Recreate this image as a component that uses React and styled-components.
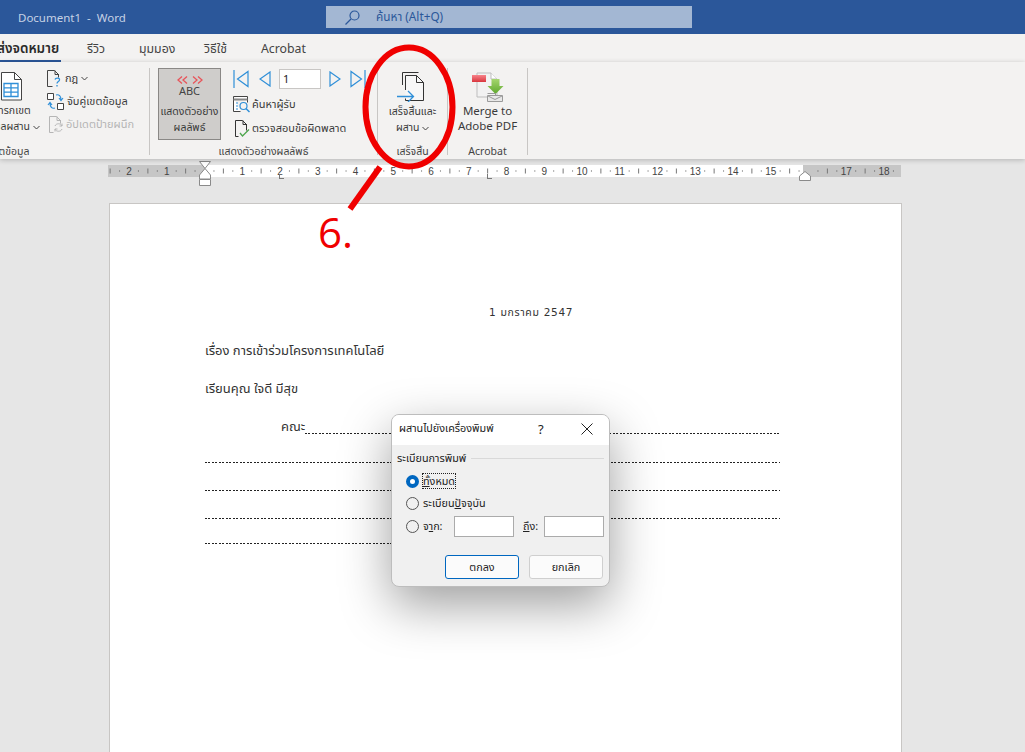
import React from 'react';
import styled, { createGlobalStyle } from 'styled-components';

const UI_FONT = '"Noto Sans", "Noto Sans Thai", "Open Sans", "DejaVu Sans", sans-serif';

const Global = createGlobalStyle`
    html, body {
        margin: 0;
        padding: 0;
        overflow: hidden;
        background: #e6e6e6;
        font-family: ${UI_FONT};
    }
`;

const NavFirst = () => (
    <svg width="18" height="18" viewBox="0 0 18 18" fill="none" stroke="#2f8fd8" strokeWidth="1.2">
        <path d="M1 0v18M15 1.500v15L4.500 9z" />
    </svg>
);
const NavPrev = () => (
    <svg width="12" height="16" viewBox="0 0 12 16" fill="none" stroke="#2f8fd8" strokeWidth="1.2">
        <path d="M11 1v14L1 8z" />
    </svg>
);
const NavNext = () => (
    <svg width="12" height="16" viewBox="0 0 12 16" fill="none" stroke="#2f8fd8" strokeWidth="1.2">
        <path d="M1 1v14L11 8z" />
    </svg>
);
const NavLast = () => (
    <svg width="17" height="18" viewBox="-2 0 17 18" fill="none" stroke="#2f8fd8" strokeWidth="1.2">
        <path d="M14 0v18M0 1.500v15L10.500 9z" />
    </svg>
);
const Chevron = () => (
    <svg width="7" height="5" viewBox="0 0 7 5" fill="none" stroke="#444" strokeWidth="1">
        <path d="M.5 1l3 3 3-3" />
    </svg>
);
const SearchGlass = () => (
    <svg width="15" height="15" viewBox="0 0 15 15" fill="none" stroke="#2b579a" strokeWidth="1.2">
        <circle cx="9.500" cy="5.500" r="4.500" />
        <path d="M6 9l-5.500 5.500" />
    </svg>
);
const FieldDoc = () => (
    <svg width="21" height="29" viewBox="0 0 21 29" fill="none">
        <path d="M.5.500h13l7 7v20.500H.500z" fill="#fff" stroke="#444" />
        <path d="M13.500.500v7h7" stroke="#444" />
        <path d="M3 11.500h14v13H3zM3 15.800h14M3 20.100h14M10 11.500v13" stroke="#2f8fd8" strokeWidth="1.300" />
    </svg>
);
const RuleDoc = () => (
    <svg width="15" height="17" viewBox="0 0 15 17" fill="none">
        <path d="M.5 16.500V.5h7l4 4v3M8 .5v4h4M.5 16.500h5" stroke="#444" />
        <path d="M8 9.500c.5-2 5-2 4.500.5-.2 1.500-2.500 1.500-2.500 3.500M10 15v1.500" stroke="#2f8fd8" strokeWidth="1.300" />
    </svg>
);
const MatchFields = () => (
    <svg width="17" height="17" viewBox="0 0 17 17" fill="none">
        <path d="M.5.500h6v6h-6zM10.500 10.500h6v6h-6z" stroke="#444" fill="#fff" />
        <path d="M9 2c3-1 5 1 5 5M12 5l2 2.500L16 5M8 15c-3 1-5-1-5-5M1 12l2-2.500L5 12" stroke="#2f8fd8" strokeWidth="1.200" />
    </svg>
);
const UpdateDoc = () => (
    <svg width="14" height="17" viewBox="0 0 14 17" fill="none" stroke="#b5b5b5">
        <path d="M.5 16.500V.5h7l4 4v3M8 .5v4h4M.5 16.500h4" />
        <path d="M6 10c1-3 6-3 7 0M13 7.500V10h-2.500M13 13c-1 3-6 3-7 0M6 15.500V13h2.500" />
    </svg>
);
const FindDoc = () => (
    <svg width="17" height="17" viewBox="0 0 17 17" fill="none">
        <path d="M.5.500h14v6M.5.500v15h7" stroke="#444" fill="#fff" />
        <path d="M.5 3.500h14" stroke="#888" strokeWidth="2" />
        <path d="M3 7h2M3 10h2M3 13h2" stroke="#2f8fd8" />
        <circle cx="10.500" cy="10" r="3.500" stroke="#2f8fd8" strokeWidth="1.200" />
        <path d="M13 12.500l3.500 3.500" stroke="#2f8fd8" strokeWidth="1.500" />
    </svg>
);
const CheckDoc = () => (
    <svg width="15" height="17" viewBox="0 0 15 17" fill="none">
        <path d="M.5 16.500V.5h7l4 4v6M8 .5v4h4M.5 16.500h3" stroke="#333" />
        <path d="M5 13l2.500 3L14 9.500" stroke="#4da64d" strokeWidth="1.300" />
    </svg>
);
// extra width on the right keeps the page where the reference has it once centred
const FinishDoc = () => (
    <svg width="31" height="30" viewBox="0 0 31 30" fill="none">
        <path d="M5.500 13V.5h16" stroke="#333" />
        <path d="M8.500 18V3.500h11l7 7v18h-18v-2" fill="#f7f7f7" stroke="#333" />
        <path d="M19.500 3.500v7h7" stroke="#333" />
        <path d="M0 24.500h16M11 19l5.500 5.500L11 30" stroke="#2f8fd8" strokeWidth="1.300" />
    </svg>
);
const AcrobatDoc = () => (
    <svg width="32" height="30" viewBox="0 0 32 30" fill="none">
        <defs>
            <linearGradient id="redBar" x1="0" y1="0" x2="0" y2="1">
                <stop offset="0" stopColor="#f7838a" />
                <stop offset="1" stopColor="#d9363e" />
            </linearGradient>
            <linearGradient id="greenArrow" x1="0" y1="0" x2="0" y2="1">
                <stop offset="0" stopColor="#a5d66e" />
                <stop offset="1" stopColor="#5fa82e" />
            </linearGradient>
        </defs>
        <path d="M5 1h14l6 6v18H5z" fill="#f2f2f2" stroke="#bdbdbd" />
        <path d="M19 1v6h6" stroke="#bdbdbd" fill="#fff" />
        <rect x="0" y="3" width="14" height="7" fill="url(#redBar)" />
        <path d="M19.500 7h8v7h4l-8 8-8-8h4z" fill="url(#greenArrow)" />
        <path d="M15.500 23.500h15v6h-15z" fill="#e8e8e8" stroke="#9a9a9a" />
        <path d="M16 24l7 3.500 7-3.500" stroke="#9a9a9a" />
        <path d="M15.500 21.500h8v2" stroke="#9a9a9a" />
    </svg>
);
const PreviewMark = () => (
    <svg width="26" height="8" viewBox="0 0 26 8" fill="none" stroke="#e8545a" strokeWidth="1.300">
        <path d="M5 .5L1 4l4 3.500M10 .5L6 4l4 3.500M16 .5L20 4l-4 3.500M21 .5L25 4l-4 3.500" />
    </svg>
);
const CloseMark = () => (
    <svg width="12" height="12" viewBox="0 0 12 12" fill="none" stroke="#222" strokeWidth="1">
        <path d="M.5.500l11 11M11.500.500l-11 11" />
    </svg>
);

const RULER_STEP = 37.75;
const RULER_ZERO = 96.5;
const rulerMarks = [];
for (let i = -3; i <= 19; i++) {
    const x = RULER_ZERO + i * RULER_STEP;
    // 16 sits under the right indent marker, so the reference doesn't show it
    if (i !== 0 && i !== 16 && i > -3 && i < 19) rulerMarks.push({ key: `n${i}`, x, label: Math.abs(i) });
    [0.25, 0.75].forEach((f) => rulerMarks.push({ key: `d${i}${f}`, x: x + f * RULER_STEP, dot: true }));
    rulerMarks.push({ key: `t${i}`, x: x + 0.5 * RULER_STEP, tick: true });
}

const RulerMarks = () => (
    <RulerSvg width="793" height="12" viewBox="0 0 793 12">
        {rulerMarks.map((m) => {
            if (m.dot) return <rect key={m.key} x={m.x - 0.5} y="5.500" width="1" height="1" fill="#555" />;
            if (m.tick) return <rect key={m.key} x={m.x - 0.5} y="3.500" width="1" height="5" fill="#777" />;
            return (
                <text key={m.key} x={m.x} y="10" textAnchor="middle" fontSize="10" fill="#444" fontFamily="Liberation Sans, sans-serif">
                    {m.label}
                </text>
            );
        })}
    </RulerSvg>
);

const App = () => (
    <Screen>
        <Global />
        <TitleBar>
            <DocName>Document1&nbsp; -&nbsp; Word</DocName>
            <SearchBox>
                <SearchGlass />
                <SearchHint>ค้นหา (Alt+Q)</SearchHint>
            </SearchBox>
        </TitleBar>

        <Tabs>
            <Tab $active $width={61} $clip>ส่งจดหมาย</Tab>
            <Tab $width={18} $gap={26}>รีวิว</Tab>
            <Tab $width={32} $gap={34}>มุมมอง</Tab>
            <Tab $width={27} $gap={33}>วิธีใช้</Tab>
            <Tab $width={46} $gap={30}>Acrobat</Tab>
        </Tabs>

        <Ribbon>
            <Group $width={150} $labelLeft>
                <GroupBody>
                    <BigButton $width={80} $shift={-29}>
                        <FieldDoc />
                        <BigText>แทรกเขต<br />ข้อมูลผสาน <Chevron /></BigText>
                    </BigButton>
                    <SmallColumn $gap={3} $left={-4}>
                        <SmallButton><RuleDoc />กฎ <Chevron /></SmallButton>
                        <SmallButton><MatchFields />จับคู่เขตข้อมูล</SmallButton>
                        <SmallButton $disabled $indent={2}><UpdateDoc />อัปเดตป้ายผนึก</SmallButton>
                    </SmallColumn>
                </GroupBody>
                <GroupLabel $clipLeft>แทรกเขตข้อมูล</GroupLabel>
            </Group>

            <Group $width={228}>
                <GroupBody $pad={8}>
                    <PreviewButton>
                        <PreviewMark />
                        <PreviewAbc>ABC</PreviewAbc>
                        <PreviewText>แสดงตัวอย่าง<br />ผลลัพธ์</PreviewText>
                    </PreviewButton>
                    <SmallColumn $gap={4} $left={12}>
                        <NavRow>
                            <NavFirst />
                            <NavPrev />
                            <RecordInput>1</RecordInput>
                            <NavNext />
                            <NavLast />
                        </NavRow>
                        <SmallButton $gap={2}><FindDoc />ค้นหาผู้รับ</SmallButton>
                        <SmallButton $gap={2} $indent={2}><CheckDoc />ตรวจสอบข้อผิดพลาด</SmallButton>
                    </SmallColumn>
                </GroupBody>
                <GroupLabel>แสดงตัวอย่างผลลัพธ์</GroupLabel>
            </Group>

            <Group $width={70}>
                <GroupBody>
                    <BigButton $width={69} $shift={0}>
                        <FinishDoc />
                        <BigText>เสร็จสิ้นและ<br />ผสาน <Chevron /></BigText>
                    </BigButton>
                </GroupBody>
                <GroupLabel>เสร็จสิ้น</GroupLabel>
            </Group>

            <Group $width={80}>
                <GroupBody>
                    <BigButton $width={79} $shift={0}>
                        <AcrobatDoc />
                        <LatinText>Merge to<br />Adobe PDF</LatinText>
                    </BigButton>
                </GroupBody>
                <GroupLabel>Acrobat</GroupLabel>
            </Group>
        </Ribbon>

        <RulerWrap>
            <Ruler>
                <RulerMargin $width={97} />
                <RulerLive />
                <RulerMargin $width={98} />
                <RulerMarks />
                <TabStop $left={171} />
                <TabStop $left={379} />
                <IndentLeft width="12" height="26" viewBox="0 0 12 26" fill="#fff" stroke="#8a8a8a">
                    <path d="M.5.500h11L6 7.500zM6 7.500L.5 14v4h11v-4zM.5 18.500h11v6h-11z" />
                </IndentLeft>
                <IndentRight width="12" height="10" viewBox="0 0 12 10" fill="#fff" stroke="#8a8a8a">
                    <path d="M6 .5L11.500 5v4.500H.500V5z" />
                </IndentRight>
            </Ruler>
        </RulerWrap>

        <Workspace>
            <Page>
                <DateLine>1 มกราคม 2547</DateLine>
                <BodyLine>เรื่อง การเข้าร่วมโครงการเทคโนโลยี</BodyLine>
                <BodyLine>เรียนคุณ ใจดี มีสุข</BodyLine>
                <FirstDotted>
                    <span>คณะ</span>
                    <DotFill />
                </FirstDotted>
                <DottedLine />
                <DottedLine />
                <DottedLine />
                <DottedLine $width={220} $height={25} />
            </Page>
        </Workspace>

        <Annotation width="1025" height="260" viewBox="0 0 1025 260" fill="none" stroke="#f00000">
            <ellipse cx="409" cy="107" rx="43.500" ry="59.500" strokeWidth="6" />
            <path d="M380 167l-30 42" strokeWidth="6" />
        </Annotation>
        <StepNumber>6.</StepNumber>

        <Dialog>
            <DialogHead>
                <DialogTitle>ผสานไปยังเครื่องพิมพ์</DialogTitle>
                <HelpMark>?</HelpMark>
                <CloseMark />
            </DialogHead>
            <DialogBody>
                <Legend><span>ระเบียนการพิมพ์</span><LegendRule /></Legend>
                <RadioRow>
                    <Radio $on />
                    <FocusLabel><u>ทั้</u>งหมด</FocusLabel>
                </RadioRow>
                <RadioRow>
                    <Radio />
                    <span>ระเบียน<u>ปั</u>จจุบัน</span>
                </RadioRow>
                <RangeRow>
                    <Radio />
                    <RangeLabel>จ<u>า</u>ก:</RangeLabel>
                    <RangeInput />
                    <ToLabel><u>ถึ</u>ง:</ToLabel>
                    <RangeInput />
                </RangeRow>
                <DialogActions>
                    <DialogButton $primary>ตกลง</DialogButton>
                    <DialogButton>ยกเลิก</DialogButton>
                </DialogActions>
            </DialogBody>
        </Dialog>
    </Screen>
);

const Screen = styled.div`
    position: relative;
    width: 1025px;
    height: 752px;
    overflow: hidden;
    background: #e6e6e6;
`;

const TitleBar = styled.div`
    display: flex;
    align-items: center;
    height: 34px;
    background: #2b579a;
`;

const DocName = styled.div`
    width: 326px;
    box-sizing: border-box;
    padding-left: 18px;
    font-size: 11.500px;
    color: #c6d2e5;
`;

const SearchBox = styled.div`
    display: flex;
    align-items: center;
    width: 366px;
    height: 22px;
    box-sizing: border-box;
    padding-left: 19px;
    background: #a3b7d3;
`;

const SearchHint = styled.span`
    margin-left: 16px;
    font-size: 11.800px;
    color: #2b579a;
`;

const Tabs = styled.div`
    display: flex;
    height: 28px;
    background: #f3f2f1;
    overflow: hidden;
`;

const Tab = styled.div`
    width: ${(p) => p.$width}px;
    margin-left: ${(p) => p.$gap || 0}px;
    height: 26px;
    line-height: 29px;
    font-size: ${(p) => (p.$active ? '13.500px' : '12.300px')};
    white-space: nowrap;
    color: ${(p) => (p.$active ? '#2b2b2b' : '#444')};
    font-weight: ${(p) => (p.$active ? 600 : 400)};
    text-indent: ${(p) => (p.$clip ? '-3px' : '0')};
    border-bottom: ${(p) => (p.$active ? '2px solid #2b579a' : '2px solid transparent')};
`;

const Ribbon = styled.div`
    display: flex;
    height: 97px;
    box-sizing: border-box;
    padding-top: 6px;
    background: #f3f2f1;
    box-shadow: 0 1px 5px rgba(0, 0, 0, 0.22);
    position: relative;
    z-index: 1;
`;

const Group = styled.div`
    display: flex;
    flex-direction: column;
    flex: none;
    width: ${(p) => p.$width}px;
    height: 87px;
    box-sizing: border-box;
    border-right: 1px solid #c8c6c4;
    align-items: ${(p) => (p.$labelLeft ? 'flex-start' : 'stretch')};
`;

const GroupBody = styled.div`
    display: flex;
    flex: none;
    height: 76px;
    padding-left: ${(p) => p.$pad || 0}px;
`;

const GroupLabel = styled.div`
    flex: none;
    margin-left: ${(p) => (p.$clipLeft ? '-34px' : '0')};
    height: 15px;
    line-height: 15px;
    font-size: 10.500px;
    text-align: center;
    white-space: nowrap;
    color: #444;
`;

const BigButton = styled.div`
    display: flex;
    flex-direction: column;
    align-items: center;
    flex: none;
    width: ${(p) => p.$width}px;
    margin-left: ${(p) => p.$shift}px;
    padding-top: 4px;
    box-sizing: border-box;
`;

const BigText = styled.div`
    margin-top: 1px;
    font-size: 10.500px;
    line-height: 16px;
    text-align: center;
    white-space: nowrap;
    color: #3a3a3a;
`;

const LatinText = styled(BigText)`
    font-size: 11.500px;
    line-height: 15px;
    margin-top: 1px;
`;

const PreviewButton = styled.div`
    display: flex;
    flex-direction: column;
    align-items: center;
    flex: none;
    width: 63px;
    height: 72px;
    box-sizing: border-box;
    padding-top: 7px;
    background: #cfcdcb;
    border: 1px solid #8a8886;
`;

const PreviewAbc = styled.div`
    font-size: 11px;
    line-height: 14px;
    color: #444;
`;

const PreviewText = styled(BigText)`
    margin-top: 5px;
`;

const SmallColumn = styled.div`
    display: flex;
    flex-direction: column;
    gap: ${(p) => p.$gap}px;
    margin-left: ${(p) => p.$left}px;
`;

const SmallButton = styled.div`
    display: flex;
    align-items: center;
    gap: ${(p) => p.$gap ?? 3}px;
    height: 20px;
    padding-left: ${(p) => p.$indent || 0}px;
    font-size: 11px;
    white-space: nowrap;
    color: ${(p) => (p.$disabled ? '#b5b5b5' : '#3a3a3a')};
`;

const NavRow = styled.div`
    display: flex;
    align-items: center;
    gap: 8px;
    height: 22px;
`;

const RecordInput = styled.div`
    width: 42px;
    height: 20px;
    box-sizing: border-box;
    padding-left: 3px;
    line-height: 18px;
    font-size: 11px;
    color: #222;
    background: #fff;
    border: 1px solid #c8c6c4;
`;

const RulerWrap = styled.div`
    height: 45px;
    padding: 6px 0 0 108px;
    box-sizing: border-box;
`;

const Ruler = styled.div`
    position: relative;
    display: flex;
    width: 793px;
    height: 12px;
`;

const RulerMargin = styled.div`
    flex: none;
    width: ${(p) => p.$width}px;
    background: #c6c6c6;
`;

const RulerLive = styled.div`
    flex: 1;
    background: #fff;
`;

const RulerSvg = styled.svg`
    position: absolute;
    left: 0;
    top: 0;
`;

const TabStop = styled.div`
    position: absolute;
    left: ${(p) => p.$left}px;
    top: 9px;
    width: 4px;
    height: 4px;
    border-left: 1px solid #777;
    border-bottom: 1px solid #777;
`;

const IndentLeft = styled.svg`
    position: absolute;
    left: 91px;
    top: -4px;
`;

const IndentRight = styled.svg`
    position: absolute;
    left: 691px;
    top: 6px;
`;

const Workspace = styled.div`
    padding-left: 110px;
`;

const Page = styled.div`
    width: 791px;
    height: 560px;
    box-sizing: border-box;
    padding: 99px 121px 0 95px;
    background: #fff;
    box-shadow: 0 0 0 1px #c8c6c4;
    font-size: 13px;
    color: #333;
`;

const DateLine = styled.div`
    height: 19px;
    line-height: 19px;
    padding-left: 284px;
    font-family: "DejaVu Sans", ${UI_FONT};
    font-size: 10.500px;
    letter-spacing: 0.700px;
    white-space: nowrap;
`;

const BodyLine = styled.div`
    margin-top: 19px;
    height: 19px;
    line-height: 19px;
    white-space: nowrap;
`;

const dots = `
    background-image: repeating-linear-gradient(90deg, #222 0 2px, transparent 2px 3.500px);
    background-repeat: no-repeat;
    background-position: left bottom;
    background-size: 100% 1px;
`;

const FirstDotted = styled.div`
    display: flex;
    align-items: flex-start;
    height: 18px;
    margin-top: 19px;
    padding-left: 76px;
    line-height: 19px;
`;

const DotFill = styled.div`
    flex: 1;
    height: 1px;
    align-self: flex-end;
    margin-bottom: 1px;
    ${dots}
`;

const DottedLine = styled.div`
    width: ${(p) => (p.$width ? `${p.$width}px` : '100%')};
    height: ${(p) => p.$height || 28}px;
    ${dots}
`;

const Annotation = styled.svg`
    position: absolute;
    left: 0;
    top: 0;
    z-index: 2;
`;

const StepNumber = styled.div`
    position: absolute;
    left: 318px;
    top: 205px;
    z-index: 2;
    font-family: "Open Sans", sans-serif;
    font-size: 42px;
    line-height: 54px;
    color: #f00000;
`;

const Dialog = styled.div`
    position: absolute;
    left: 391px;
    top: 414px;
    z-index: 3;
    width: 219px;
    height: 173px;
    box-sizing: border-box;
    border: 1px solid #bdbdbd;
    border-radius: 8px;
    overflow: hidden;
    background: #f0f0f0;
    box-shadow: 0 18px 50px rgba(0, 0, 0, 0.38);
    font-size: 10.800px;
    color: #222;
`;

const DialogHead = styled.div`
    display: flex;
    align-items: center;
    height: 30px;
    box-sizing: border-box;
    padding: 0 16px 3px 7px;
    background: #fff;
`;

const DialogTitle = styled.div`
    width: 139px;
    white-space: nowrap;
`;

const HelpMark = styled.div`
    width: 43px;
    font-size: 13px;
`;

const DialogBody = styled.div`
    padding: 6px 5px 0 5px;
`;

const Legend = styled.div`
    display: flex;
    align-items: center;
    gap: 5px;
    height: 14px;
    margin-bottom: 5px;
`;

const LegendRule = styled.div`
    flex: 1;
    height: 1px;
    background: #d9d9d9;
`;

const RadioRow = styled.div`
    display: flex;
    align-items: center;
    gap: 4px;
    height: 22px;
    padding-left: 9px;
`;

const Radio = styled.div`
    flex: none;
    width: 13px;
    height: 13px;
    box-sizing: border-box;
    border-radius: 50%;
    border: ${(p) => (p.$on ? '4px solid #0067c0' : '1px solid #555')};
    background: ${(p) => (p.$on ? '#fff' : 'transparent')};
`;

const FocusLabel = styled.span`
    outline: 1px dotted #222;
    line-height: 14px;
`;

const RangeRow = styled(RadioRow)`
    height: 24px;
`;

const RangeLabel = styled.span`
    flex: none;
    width: 27px;
`;

const ToLabel = styled.span`
    flex: none;
    width: 17px;
    margin-left: 5px;
`;

const RangeInput = styled.div`
    flex: none;
    width: 60px;
    height: 21px;
    box-sizing: border-box;
    background: #fff;
    border: 1px solid #ababab;
`;

const DialogActions = styled.div`
    display: flex;
    justify-content: flex-end;
    gap: 10px;
    margin-top: 17px;
    padding-right: 1px;
`;

const DialogButton = styled.div`
    width: 74px;
    height: 24px;
    box-sizing: border-box;
    line-height: 22px;
    text-align: center;
    border-radius: 3px;
    background: #fbfbfb;
    border: 1px solid ${(p) => (p.$primary ? '#0067c0' : '#cfcfcf')};
`;

export default App;
